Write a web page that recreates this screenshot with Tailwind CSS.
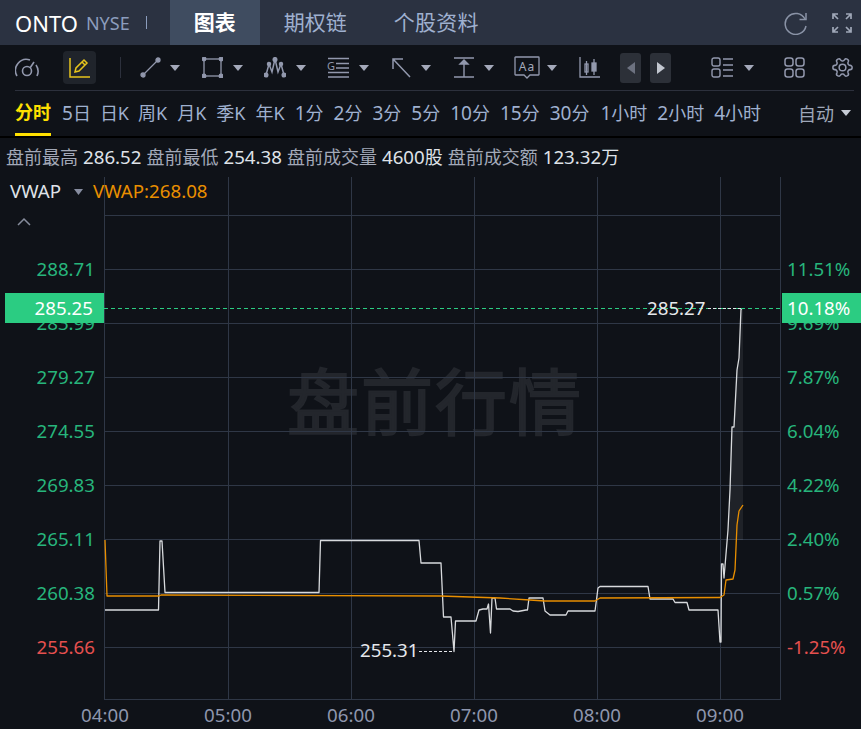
<!doctype html>
<html lang="zh"><head><meta charset="utf-8"><script src="https://cdn.jsdelivr.net/npm/@tailwindcss/browser@4"></script><title>ONTO</title></head>
<body class="bg-[#0f1218] font-['Noto_Sans','Noto_Sans_CJK_SC',sans-serif] overflow-hidden">
<div class="w-[861px] h-[729px] flex flex-col">
 <header class="h-[45px] bg-[#2b3241] flex items-center shrink-0">
  <span class="ml-[15px] text-[22px] text-white leading-none">ONTO</span>
  <span class="ml-[8px] text-[18px] text-[#8c9dbd] leading-none">NYSE</span>
  <span class="ml-[16px] w-px h-[13px] bg-[#8c9dbd]"></span>
  <div class="ml-[23px] w-[90px] h-full bg-[#3f4c60] flex items-center justify-center text-[21px] font-bold text-white">图表</div>
  <span class="ml-[24px] text-[21px] text-[#9fb0cf]">期权链</span>
  <span class="ml-[47px] text-[21px] tracking-[0.250px] text-[#9fb0cf]">个股资料</span>
  <svg class="ml-auto" width="24" height="24" viewBox="0 0 24 24" fill="none" stroke="#8a93a6" stroke-width="1.500"><path d="M21 8A10.500 10.500 0 1 0 22 15"/><path d="M22 2v6.500h-6.500" /></svg>
  <svg class="ml-[24px] mr-[9px]" width="20" height="20" viewBox="0 0 20 20" fill="none" stroke="#a0a8b8" stroke-width="1.700"><path d="M1 6V1h5M1 1l5 5M14 1h5v5M19 1l-5 5M1 14v5h5M1 19l5-5M19 14v5h-5M19 19l-5-5"/></svg>
 </header>

 <div class="mx-[15px] w-[839px] h-[46px] border-b border-[#2c303c] flex items-center shrink-0">
  <svg width="24" height="20" viewBox="0 0 24 20" fill="none" stroke="#9298ad" stroke-width="1.600"><path d="M2 18A11 11 0 0 1 15 2M21 7a11 11 0 0 1 1 11"/><circle cx="12" cy="13" r="4.500"/><path d="M15 10l4-6"/></svg>
  <div class="ml-[24px] w-[33px] h-[33px] rounded bg-[#20242b] flex items-center justify-center"><svg width="22" height="22" viewBox="0 0 22 22" fill="none" stroke="#e6c41c" stroke-width="1.500"><path d="M1 1v19h20"/><path d="M6 15l1-4 8-8 3 3-8 8z"/><path d="M13 5l3 3"/></svg></div>
  <span class="ml-[24px] w-px h-[21px] bg-[#2c303c]"></span>
  <svg class="ml-[19px]" width="21" height="21" viewBox="0 0 21 21" fill="none" stroke="#9298ad" stroke-width="1.300"><path d="M3 18L18 3"/><circle cx="3" cy="18" r="2" fill="#9298ad"/><circle cx="18" cy="3" r="2" fill="#9298ad"/></svg>
  <svg class="ml-[9px]" width="10" height="6" viewBox="0 0 10 6"><path d="M0 0h10L5 6z" fill="#a4a9ba"/></svg>
  <svg class="ml-[22px]" width="21" height="21" viewBox="0 0 21 21" fill="none" stroke="#9298ad" stroke-width="1.300"><rect x="2" y="2" width="17" height="17"/><g fill="#9298ad"><circle cx="2" cy="2" r="1.800"/><circle cx="19" cy="2" r="1.800"/><circle cx="2" cy="19" r="1.800"/><circle cx="19" cy="19" r="1.800"/></g></svg>
  <svg class="ml-[10px]" width="10" height="6" viewBox="0 0 10 6"><path d="M0 0h10L5 6z" fill="#a4a9ba"/></svg>
  <svg class="ml-[21px]" width="22" height="21" viewBox="0 0 22 21" fill="none" stroke="#9298ad" stroke-width="1.500"><path d="M2 18L5 7l3 8 3-13 3 13 3-8 3 11"/><g fill="#9298ad"><circle cx="2" cy="18" r="1.800"/><circle cx="5" cy="7" r="1.500"/><circle cx="11" cy="2.500" r="1.800"/><circle cx="17" cy="7" r="1.500"/><circle cx="20" cy="18" r="1.800"/></g></svg>
  <svg class="ml-[10px]" width="10" height="6" viewBox="0 0 10 6"><path d="M0 0h10L5 6z" fill="#a4a9ba"/></svg>
  <svg class="ml-[21px]" width="22" height="21" viewBox="0 0 22 21" fill="none" stroke="#9298ad" stroke-width="1.300"><path d="M1 1.500h21M9 6.500h13M9 11h13M1 15.500h21M1 20h21"/><text x="0" y="13" stroke="none" fill="#9298ad" class="text-[11px]">G</text></svg>
  <svg class="ml-[10px]" width="10" height="6" viewBox="0 0 10 6"><path d="M0 0h10L5 6z" fill="#a4a9ba"/></svg>
  <svg class="ml-[22px]" width="21" height="21" viewBox="0 0 21 21" fill="none" stroke="#9298ad" stroke-width="1.500"><path d="M2 12V2h10M2 2l17 18"/></svg>
  <svg class="ml-[9px]" width="10" height="6" viewBox="0 0 10 6"><path d="M0 0h10L5 6z" fill="#a4a9ba"/></svg>
  <svg class="ml-[23px]" width="20" height="21" viewBox="0 0 20 21" fill="none" stroke="#9298ad" stroke-width="1.400"><path d="M0 1h20M0 20h20M10 3v17"/><path d="M6 7l4-4 4 4z" fill="#9298ad"/></svg>
  <svg class="ml-[10px]" width="10" height="6" viewBox="0 0 10 6"><path d="M0 0h10L5 6z" fill="#a4a9ba"/></svg>
  <svg class="ml-[20px]" width="26" height="23" viewBox="0 0 26 23" fill="none" stroke="#9298ad" stroke-width="1.300"><path d="M1.500 1h23a.5.500 0 0 1 .5.500v17a.5.500 0 0 1-.5.500H16l-3 3-3-3H1.500a.5.500 0 0 1-.5-.500v-17a.5.500 0 0 1 .5-.500z"/><text x="13" y="15" text-anchor="middle" stroke="none" fill="#a4a9ba" class="text-[12px] tracking-[1px]">Aa</text></svg>
  <svg class="ml-[7px]" width="10" height="6" viewBox="0 0 10 6"><path d="M0 0h10L5 6z" fill="#a4a9ba"/></svg>
  <svg class="ml-[22px]" width="21" height="21" viewBox="0 0 21 21" fill="none" stroke="#9298ad" stroke-width="1.300"><path d="M1 0v20h20"/><rect x="6" y="7" width="3" height="8"/><path d="M7.500 4v14"/><rect x="13" y="6" width="4" height="8" fill="#9298ad"/><path d="M15 2v16"/></svg>
  <div class="ml-[20px] w-[21px] h-[30px] rounded-[3px] bg-[#2c3038] flex items-center justify-center"><svg width="8" height="12" viewBox="0 0 8 12"><path d="M8 0v12L0 6z" fill="#6d7280"/></svg></div>
  <div class="ml-[9px] w-[21px] h-[30px] rounded-[3px] bg-[#2c3038] flex items-center justify-center"><svg width="8" height="12" viewBox="0 0 8 12"><path d="M0 0v12l8-6z" fill="#c3c7d0"/></svg></div>
  <svg class="ml-[40px]" width="22" height="21" viewBox="0 0 22 21" fill="none" stroke="#9298ad" stroke-width="1.400"><rect x="1" y="1" width="8" height="8" rx="2"/><rect x="1" y="12" width="8" height="8" rx="2"/><path d="M12 2h10M12 8h10M12 13h10M12 19h10"/></svg>
  <svg class="ml-[11px]" width="10" height="6" viewBox="0 0 10 6"><path d="M0 0h10L5 6z" fill="#a4a9ba"/></svg>
  <svg class="ml-[30px]" width="21" height="21" viewBox="0 0 21 21" fill="none" stroke="#9298ad" stroke-width="1.500"><rect x="1" y="1" width="8" height="8" rx="2.500"/><rect x="12" y="1" width="8" height="8" rx="2.500"/><rect x="1" y="12" width="8" height="8" rx="2.500"/><rect x="12" y="12" width="8" height="8" rx="2.500"/></svg>
  <svg class="ml-[26px]" width="23" height="23" viewBox="0 0 24 24" fill="none" stroke="#9298ad" stroke-width="1.600"><g transform="rotate(90 12 12)"><path d="M12.220 2h-.44a2 2 0 0 0-2 2v.18a2 2 0 0 1-1 1.730l-.43.25a2 2 0 0 1-2 0l-.15-.08a2 2 0 0 0-2.730.73l-.22.38a2 2 0 0 0 .73 2.730l.15.1a2 2 0 0 1 1 1.720v.51a2 2 0 0 1-1 1.740l-.15.09a2 2 0 0 0-.73 2.730l.22.38a2 2 0 0 0 2.730.73l.15-.08a2 2 0 0 1 2 0l.43.25a2 2 0 0 1 1 1.730V20a2 2 0 0 0 2 2h.44a2 2 0 0 0 2-2v-.18a2 2 0 0 1 1-1.730l.43-.25a2 2 0 0 1 2 0l.15.08a2 2 0 0 0 2.730-.73l.22-.39a2 2 0 0 0-.73-2.730l-.15-.08a2 2 0 0 1-1-1.740v-.5a2 2 0 0 1 1-1.740l.15-.09a2 2 0 0 0 .73-2.730l-.22-.38a2 2 0 0 0-2.730-.73l-.15.08a2 2 0 0 1-2 0l-.43-.25a2 2 0 0 1-1-1.730V4a2 2 0 0 0-2-2z"/><circle cx="12" cy="12" r="3.500"/></g></svg>
 </div>

 <nav class="h-[47px] flex items-center pl-[15px] gap-[10px] text-[18px] text-[#9fb0cf] shrink-0 relative border-b-2 border-black">
  <span class="font-bold text-[#ffe000] h-[45px] pt-[8px] border-b-[3px] border-[#ffe000]">分时</span>
  <span class="ml-[1px]"><span class="text-[19px]">5</span>日</span><span class="-ml-[1px]">日K</span><span class="-ml-[1px]">周K</span><span>月K</span><span>季K</span><span>年K</span><span><span class="text-[19px]">1</span>分</span><span><span class="text-[19px]">2</span>分</span><span><span class="text-[19px]">3</span>分</span><span><span class="text-[19px]">5</span>分</span><span><span class="text-[19px]">10</span>分</span><span><span class="text-[19px]">15</span>分</span><span><span class="text-[19px]">30</span>分</span><span class="ml-[1px]"><span class="text-[19px]">1</span>小时</span><span><span class="text-[19px]">2</span>小时</span><span><span class="text-[19px]">4</span>小时</span>
  <span class="ml-auto mr-[27px] text-[#9ea7b8] relative top-[1px]">自动</span>
  <svg class="absolute right-[10px] top-[19px]" width="10" height="6" viewBox="0 0 10 6"><path d="M0 0h10L5 6z" fill="#c7ccd6"/></svg>
 </nav>

 <div class="h-[39px] flex items-center pl-[6px] gap-[5px] text-[18px] text-[#a3a9b8] shrink-0">
  <span>盘前最高</span><span class="text-[18.700px] text-[#dfe2e8]">286.52</span><span>盘前最低</span><span class="text-[18.700px] text-[#dfe2e8]">254.38</span><span>盘前成交量</span><span class="text-[#dfe2e8]"><span class="text-[18.700px]">4600</span>股</span><span>盘前成交额</span><span class="text-[#dfe2e8]"><span class="text-[18.700px]">123.32</span>万</span>
 </div>

 <svg width="861" height="552" viewBox="0 177 861 552" class="block shrink-0 text-[18.700px]">
  <text x="435" y="429" text-anchor="middle" stroke="#23262c" stroke-width="2" class="text-[72px] fill-[#23262c] tracking-[2px]">盘前行情</text>
  <g stroke="#2f3746" stroke-width="1" fill="none" shape-rendering="crispEdges">
   <rect x="104.500" y="176.500" width="676" height="523"/>
   <path d="M228.500 177V700M351.500 177V700M474.500 177V700M597.500 177V700M720.500 177V700"/>
   <path d="M104 215.500H780M104 269.500H780M104 323.500H780M104 377.500H780M104 431.500H780M104 485.500H780M104 539.500H780M104 593.500H780M104 647.500H780"/>
  </g>
  <path d="M729 540L731 428H734L737 370L739 358L741 309H743V540Z" fill="#ffffff" fill-opacity="0.07"/>
  <polyline fill="none" stroke="#d8dadd" stroke-width="1.300" stroke-linejoin="round" points="105,610 158.500,610 160,541 162,541 165,592.500 319,592.500 320.500,540.500 419,540.500 421,563 441,563 443.500,617 451,617 454,651.500 455.500,621 476,621 479,610 483,609 487,609 488.500,604 490.500,633 492,598 495,598 496.500,609 510,609 513,611 518,611.500 526,610 527.500,610 529,598 543,598 545,611 550,615 566,615 568,611 595,611 598,588 600,586.500 648,586.500 650,599 673,599 675,602.500 687,602.500 689,610 718,610 720,642 721,642 721.500,564 723,564 724,578 728,530 730,490 732,427 734,427 737,370 739,358 741,309 742,309"/>
  <polyline fill="none" stroke="#e98f00" stroke-width="1.300" stroke-linejoin="round" points="105,540 107,596 159,596 161,595 440,596 500,598 530,600 545,601 595,601 600,598 720,597.500 724,595 726,580 733,579 735,570 737,525 739,511 743,505"/>
  <path d="M104 308.500H780" stroke="#2bcc82" stroke-dasharray="4 3" fill="none"/>
  <path d="M708 308.500H741" stroke="#e6e8ec" stroke-dasharray="3 2" fill="none"/>
  <path d="M419 651.500H454" stroke="#e6e8ec" stroke-dasharray="3 2" fill="none"/>
  <text x="647" y="315" class="fill-[#e6e8ec]">285.27</text>
  <text x="360" y="657" class="fill-[#e6e8ec]">255.31</text>
  <g text-anchor="end" class="fill-[#27b57c]">
   <text x="95" y="276">288.71</text><text x="95" y="330">283.99</text><text x="95" y="384">279.27</text><text x="95" y="438">274.55</text><text x="95" y="492">269.83</text><text x="95" y="546">265.11</text><text x="95" y="600">260.38</text><text x="95" y="654" class="fill-[#e5504f]">255.66</text>
  </g>
  <g class="fill-[#27b57c]">
   <text x="787" y="276">11.51%</text><text x="787" y="330">9.69%</text><text x="787" y="384">7.87%</text><text x="787" y="438">6.04%</text><text x="787" y="492">4.22%</text><text x="787" y="546">2.40%</text><text x="787" y="600">0.57%</text><text x="787" y="654" class="fill-[#e5504f]">-1.25%</text>
  </g>
  <rect x="5" y="293" width="99" height="30" fill="#2bcc82"/><text x="93" y="315" text-anchor="end" class="fill-white">285.25</text>
  <rect x="782" y="293" width="79" height="30" fill="#2bcc82"/><text x="787" y="315" class="fill-white">10.18%</text>
  <text x="10" y="198" class="fill-[#dfe2e8]">VWAP</text>
  <path d="M74 189h9l-4.500 6z" fill="#878da0"/>
  <text x="93" y="198" class="fill-[#e98f00]">VWAP:268.08</text>
  <path d="M18 225l6-6 6 6" fill="none" stroke="#868c9c" stroke-width="1.500"/>
  <g text-anchor="middle" class="fill-[#8e96ad]">
   <text x="105" y="722">04:00</text><text x="228" y="722">05:00</text><text x="351" y="722">06:00</text><text x="474" y="722">07:00</text><text x="597" y="722">08:00</text><text x="720" y="722">09:00</text>
  </g>
 </svg>
</div>
</body></html>
